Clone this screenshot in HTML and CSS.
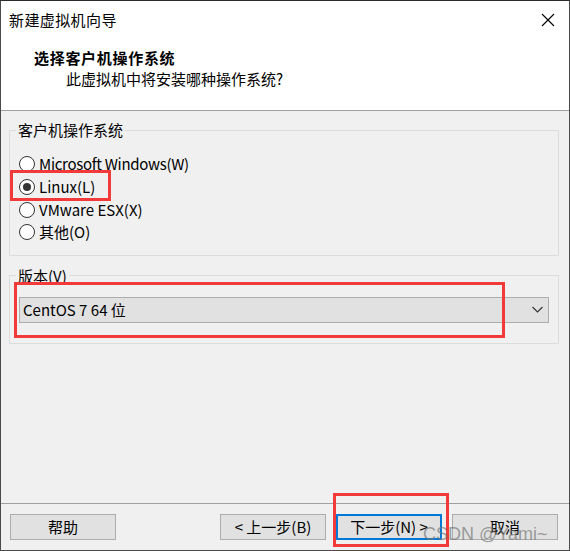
FILE: index.html
```html
<!DOCTYPE html>
<html lang="zh-CN">
<head>
<meta charset="utf-8">
<title>新建虚拟机向导</title>
<link rel="stylesheet" href="styles.css">
</head>
<body>
<div class="window">
  <div class="titlebar">
    <span class="title">新建虚拟机向导</span>
    <svg class="close" width="14" height="14" viewBox="0 0 14 14"><path d="M1 1 L13 13 M13 1 L1 13" stroke="#000" stroke-width="1.1" fill="none"/></svg>
  </div>
  <div class="header">
    <div class="h-title">选择客户机操作系统</div>
    <div class="h-sub">此虚拟机中将安装哪种操作系统?</div>
  </div>
  <div class="content">
    <fieldset class="group os">
      <legend>客户机操作系统</legend>
      <div class="radios">
        <div class="radio"><span class="circle"></span><span class="latin-tight">Microsoft Windows(W)</span></div>
        <div class="radio checked"><span class="circle"></span><span>Linux(L)</span></div>
        <div class="radio"><span class="circle"></span><span>VMware ESX(X)</span></div>
        <div class="radio"><span class="circle"></span><span>其他(O)</span></div>
      </div>
    </fieldset>
    <fieldset class="group version">
      <legend>版本(V)</legend>
      <div class="select">
        <span>CentOS 7 64 位</span>
        <svg class="chev" width="11" height="7" viewBox="0 0 11 7"><path d="M0.5 1 L5.5 6 L10.5 1" stroke="#333" stroke-width="1.1" fill="none"/></svg>
      </div>
    </fieldset>
  </div>
  <div class="footer">
    <button class="btn">帮助</button>
    <div class="spacer"></div>
    <button class="btn">&lt; 上一步(B)</button>
    <button class="btn primary">下一步(N) &gt;</button>
    <button class="btn">取消</button>
  </div>
  <div class="mark mark-linux"></div>
  <div class="mark mark-version"></div>
  <div class="mark mark-next"></div>
  <div class="watermark">CSDN @Yami~</div>
</div>
</body>
</html>
```

FILE: styles.css
```css
* { box-sizing: border-box; }
html, body { margin: 0; padding: 0; background: #f0f0f0; }
body {
  font-family: "Noto Sans CJK SC", "Noto Sans", sans-serif;
  font-size: 15px;
  color: #000;
}
.window {
  position: relative;
  width: 570px;
  height: 551px;
  border: 1px solid #4a4a4a;
  border-top-color: #2b2b2b;
  background: #f0f0f0;
  display: flex;
  flex-direction: column;
  overflow: hidden;
}
.titlebar {
  height: 37px;
  background: #fff;
  display: flex;
  align-items: center;
  justify-content: space-between;
  padding: 0 14px 0 8px;
}
.title { line-height: 20px; letter-spacing: 0.4px; }
.close { display: block; }
.header {
  height: 73px;
  background: #fff;
  border-bottom: 1px solid #a0a0a0;
  padding: 9px 0 0 33px;
}
.h-title { font-weight: bold; line-height: 21px; letter-spacing: 0.7px; }
.h-sub { margin-left: 32px; line-height: 21px; }
.content {
  flex: 1;
  padding: 9px 10px 0 8px;
}
.group {
  margin: 0;
  border: 1px solid #dcdcdc;
  padding: 0;
  min-width: 0;
}
.group legend {
  margin-left: 6px;
  padding: 0 2px;
  line-height: 20px;
}
.os .radios {
  padding: 13px 0 11px 9px;
}
.radio {
  height: 22.67px;
  display: flex;
  align-items: center;
  line-height: 20px;
}
.latin-tight { letter-spacing: -0.3px; }
.circle {
  width: 16px;
  height: 16px;
  border: 1px solid #333;
  border-radius: 50%;
  background: #fff;
  margin-right: 4px;
  display: flex;
  align-items: center;
  justify-content: center;
}
.checked .circle::after {
  content: "";
  width: 8px;
  height: 8px;
  border-radius: 50%;
  background: #333;
}
.version {
  margin-top: 10px;
}
.version .select {
  margin: 11px 9px 20px 9px;
  height: 26px;
  background: #e1e1e1;
  border: 1px solid #adadad;
  display: flex;
  align-items: center;
  justify-content: space-between;
  padding: 0 5px 0 3px;
  line-height: 20px;
}
.chev { display: block; }
.footer {
  height: 47px;
  border-top: 1px solid #a0a0a0;
  display: flex;
  align-items: flex-start;
  gap: 10px;
  padding: 10px 11px 0 9px;
}
.spacer { flex: 1; }
.btn {
  width: 106px;
  height: 26px;
  background: #e1e1e1;
  border: 1px solid #adadad;
  font: inherit;
  line-height: 20px;
  padding: 0;
  color: #000;
}
.btn.primary {
  border: 2px solid #0078d7;
}
.mark {
  position: absolute;
  border: 3px solid #f23a3a;
}
.mark-linux { left: 9px; top: 169px; width: 101px; height: 31px; }
.mark-version { left: 13px; top: 281px; width: 491px; height: 56px; }
.mark-next { left: 332px; top: 492px; width: 116px; height: 54px; }
.watermark {
  position: absolute;
  z-index: 2;
  left: 422px;
  top: 523px;
  font-family: "Liberation Sans", sans-serif;
  font-size: 18px;
  line-height: 20px;
  color: rgba(120, 120, 120, 0.7);
}
```
